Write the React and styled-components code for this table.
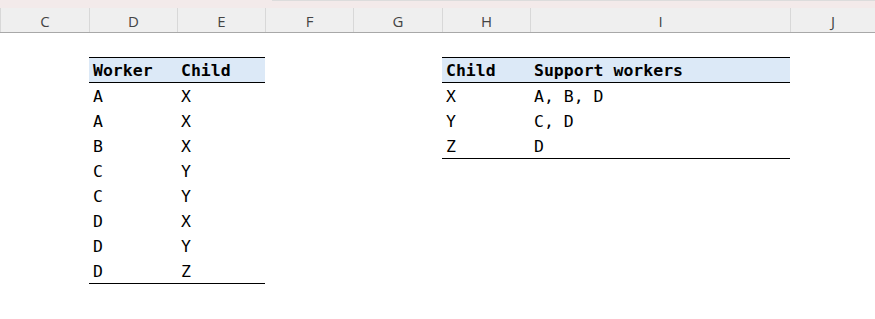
import React from 'react';
import styled, { createGlobalStyle } from 'styled-components';

const GlobalStyle = createGlobalStyle`
  html, body {
    margin: 0;
    padding: 0;
    background: #ffffff;
  }
`;

const columns = [
  { key: 'C', width: 89 },
  { key: 'D', width: 88 },
  { key: 'E', width: 88 },
  { key: 'F', width: 88 },
  { key: 'G', width: 89 },
  { key: 'H', width: 88 },
  { key: 'I', width: 260 },
  { key: 'J', width: 85 },
];

const track = columns.map((c) => `${c.width}px`).join(' ');

const Sheet = styled.div`
  width: 875px;
  height: 319px;
  overflow: hidden;
  background: #ffffff;
`;

const TopStrip = styled.div`
  height: 8px;
  background: #f3eaea;
  display: flex;

  span {
    margin-left: 272px;
    flex: 1;
    border-top: 1px solid #dcdcdc;
  }
`;

const ColumnBar = styled.div`
  display: grid;
  grid-template-columns: ${track};
  height: 24px;
  background: #efefef;
  border-bottom: 1px solid #a8a8a8;
`;

const ColumnLabel = styled.div`
  display: flex;
  align-items: center;
  justify-content: center;
  border-left: 1px solid #d8d8d8;
  font-family: 'Open Sans', 'Noto Sans', sans-serif;
  font-size: 15px;
  color: #444444;
  padding-top: 1px;
`;

const Body = styled.div`
  display: grid;
  grid-template-columns: ${track};
  padding-top: 24px;
  align-items: start;
`;

const Table = styled.div`
  grid-column: ${({ $from }) => $from} / span ${({ $span }) => $span};
  display: grid;
  grid-template-columns: ${({ $cols }) => $cols};
  border-top: 1px solid #000000;
  border-bottom: 1px solid #000000;
  font-family: 'DejaVu Sans Mono', 'Liberation Mono', monospace;
  font-size: 16.5px;
  color: #000000;
`;

const Cell = styled.div`
  height: ${({ $head }) => ($head ? 25 : 25)}px;
  box-sizing: border-box;
  padding: 0 0 3px 4px;
  display: flex;
  align-items: flex-end;
  line-height: 1;
  white-space: pre;
  font-weight: ${({ $head }) => ($head ? 700 : 400)};
  background: ${({ $head }) => ($head ? '#dce9f7' : 'transparent')};
  border-bottom: ${({ $head }) => ($head ? '1px solid #000000' : 'none')};
`;

const assignments = [
  ['A', 'X'],
  ['A', 'X'],
  ['B', 'X'],
  ['C', 'Y'],
  ['C', 'Y'],
  ['D', 'X'],
  ['D', 'Y'],
  ['D', 'Z'],
];

const support = [
  ['X', 'A, B, D'],
  ['Y', 'C, D'],
  ['Z', 'D'],
];

const DataTable = ({ from, span, cols, head, rows }) => (
  <Table $from={from} $span={span} $cols={cols}>
    {head.map((h) => (
      <Cell key={h} $head>
        {h}
      </Cell>
    ))}
    {rows.map((row, i) =>
      row.map((value, j) => <Cell key={`${i}-${j}`}>{value}</Cell>),
    )}
  </Table>
);

const App = () => (
  <>
    <GlobalStyle />
    <Sheet>
      <TopStrip>
        <span />
      </TopStrip>
      <ColumnBar>
        {columns.map((c) => (
          <ColumnLabel key={c.key}>{c.key}</ColumnLabel>
        ))}
      </ColumnBar>
      <Body>
        <DataTable
          from={2}
          span={2}
          cols="88px 88px"
          head={['Worker', 'Child']}
          rows={assignments}
        />
        <DataTable
          from={6}
          span={2}
          cols="88px 260px"
          head={['Child', 'Support workers']}
          rows={support}
        />
      </Body>
    </Sheet>
  </>
);

export default App;
